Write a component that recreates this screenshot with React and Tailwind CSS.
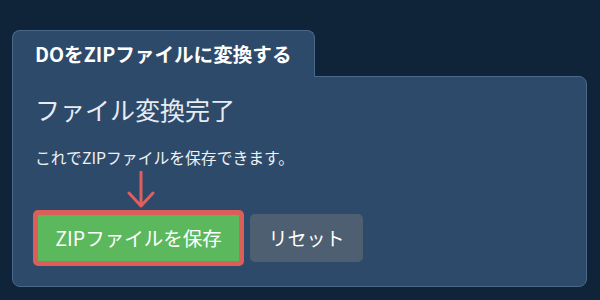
export default function App() {
  return (
    <div
      className="w-[600px] h-[300px] bg-[#0f2339] pt-[30px] pl-[12px] text-white"
      style={{ fontFamily: '"Noto Sans CJK JP", "Noto Sans", sans-serif' }}
    >
      <div className="w-[575px]">
        <div className="relative z-10 -mb-px inline-flex h-[47px] items-center rounded-t-lg border border-b-0 border-[#4a6889] bg-[#2d4a6a] pl-[22px] pr-[22px]">
          <span className="text-[19.6px] font-bold leading-none">DOをZIPファイルに変換する</span>
        </div>
        <div className="h-[211px] rounded-lg rounded-tl-none border border-[#4a6889] bg-[#2d4a6a] px-[22px] pt-[16px]">
          <h2 className="text-[25px] font-normal leading-[32px] text-[#e8ecf1]">ファイル変換完了</h2>
          <p className="mt-[23px] text-[15.8px] leading-[20px] text-[#eef1f5]">
            これでZIPファイルを保存できます。
          </p>
          <svg className="ml-[92px] mt-[3px] block" width="30" height="38" viewBox="0 0 30 38" fill="none">
            <path d="M14 1 V35 M2 22 L14 35 L26 22" stroke="#e05e5c" strokeWidth="3" strokeLinecap="round" strokeLinejoin="round" />
          </svg>
          <div className="mt-px flex items-center gap-[6px] -ml-[2px]">
            <button className="flex h-[56px] w-[211px] items-center justify-center rounded-[5px] border-[5px] border-[#dc5e59] bg-[#5cb85c] text-[19.5px] text-white">
              ZIPファイルを保存
            </button>
            <button className="flex h-[48px] w-[113px] items-center justify-center rounded-[5px] bg-[#4e5f71] text-[19px] text-white">
              リセット
            </button>
          </div>
        </div>
      </div>
    </div>
  );
}
